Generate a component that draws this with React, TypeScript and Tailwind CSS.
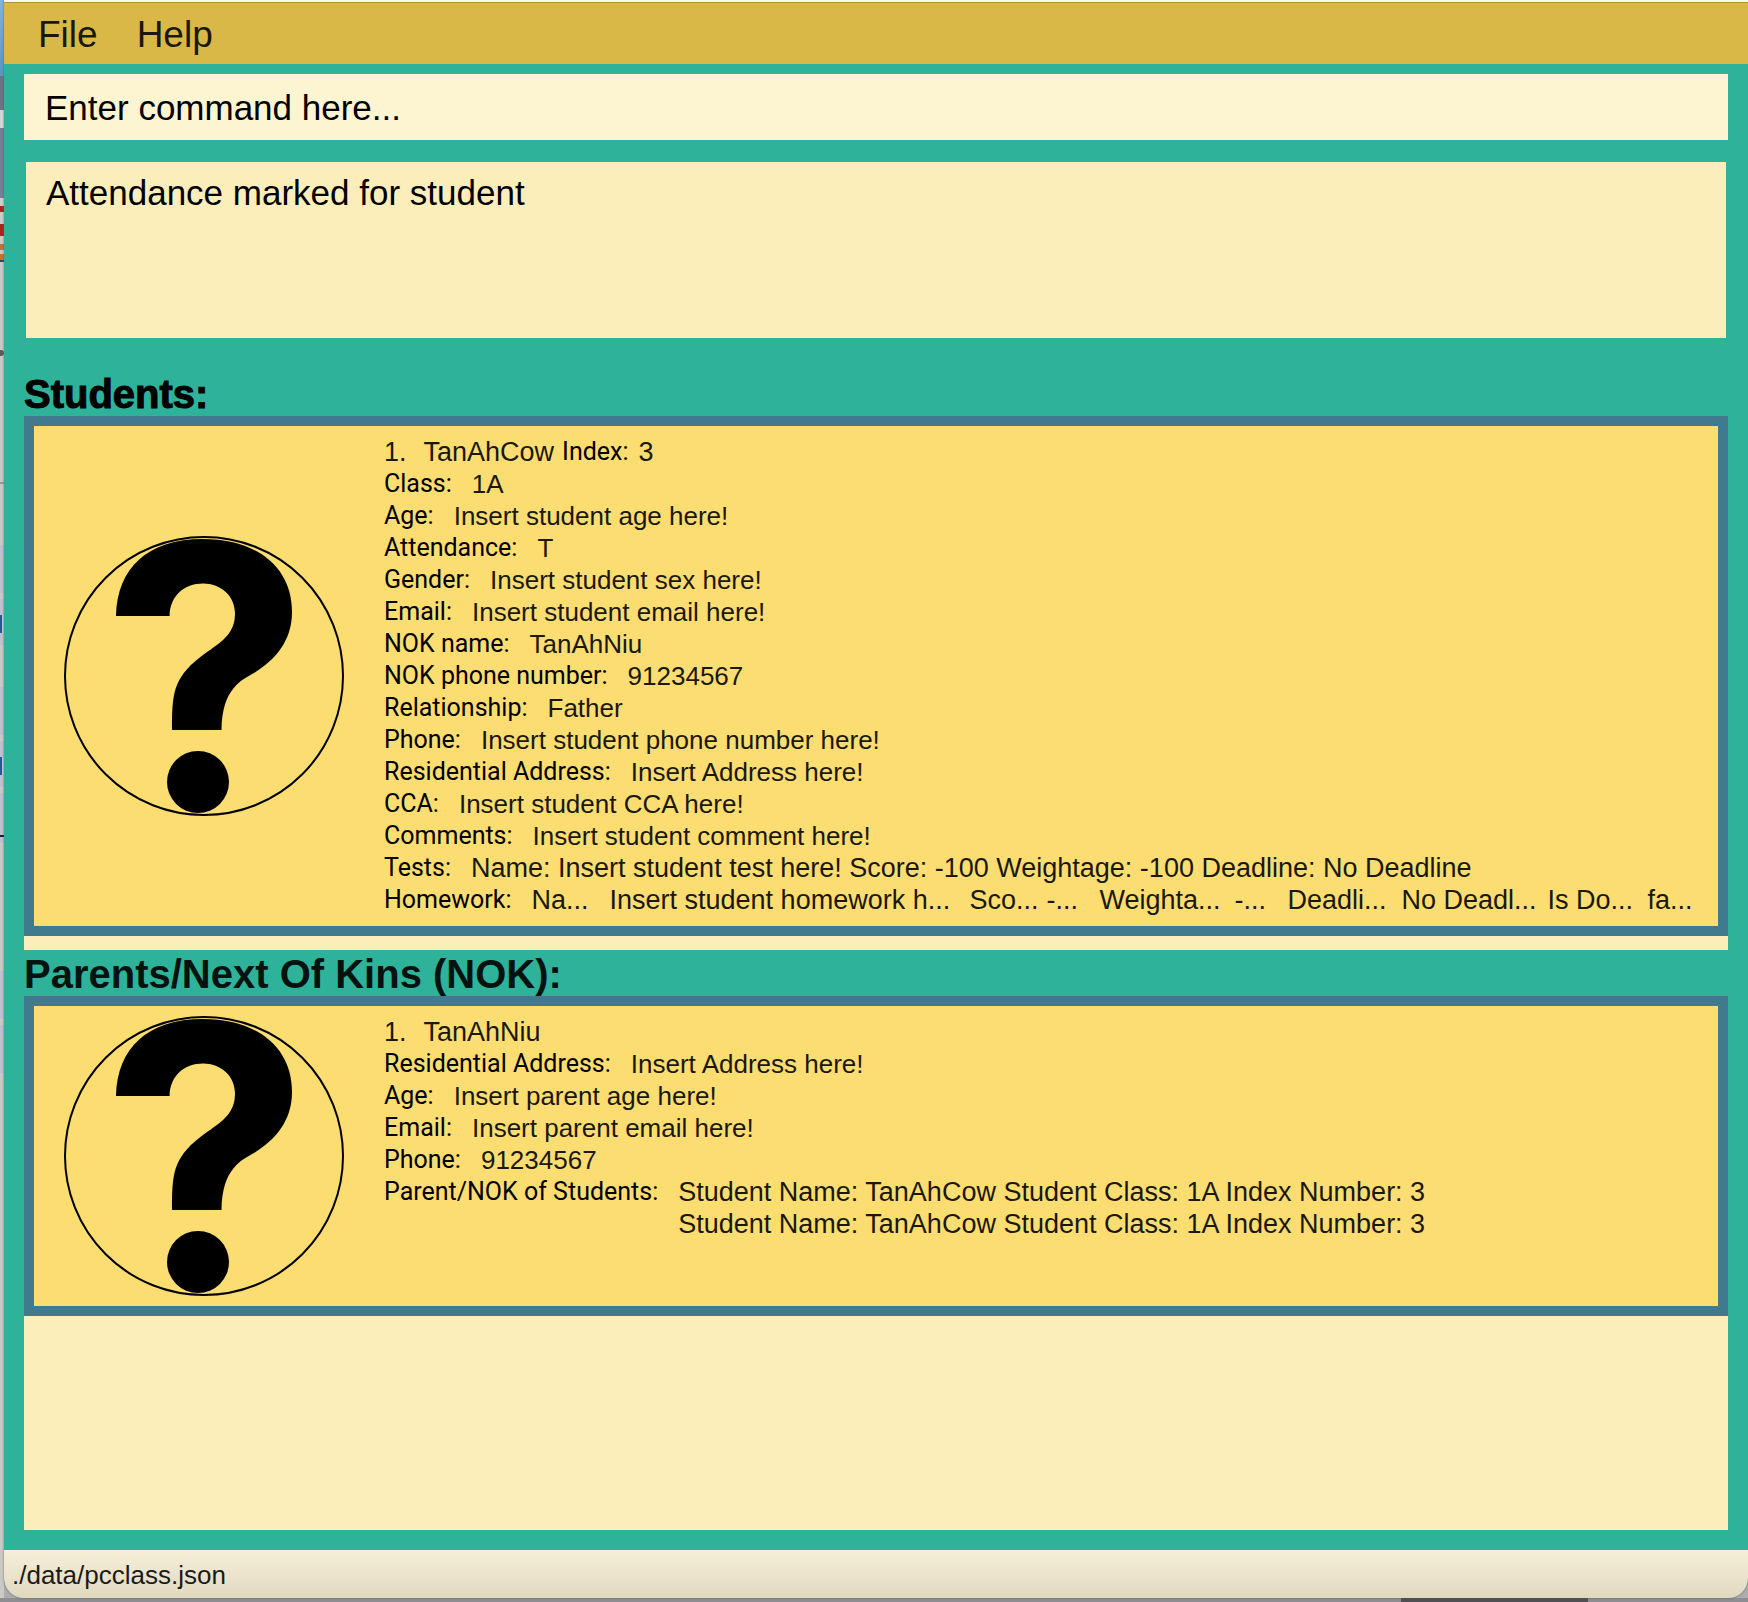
import type { ReactNode } from "react";

const studentFields: [string, string][] = [
  ["Class:", "1A"],
  ["Age:", "Insert student age here!"],
  ["Attendance:", "T"],
  ["Gender:", "Insert student sex here!"],
  ["Email:", "Insert student email here!"],
  ["NOK name:", "TanAhNiu"],
  ["NOK phone number:", "91234567"],
  ["Relationship:", "Father"],
  ["Phone:", "Insert student phone number here!"],
  ["Residential Address:", "Insert Address here!"],
  ["CCA:", "Insert student CCA here!"],
  ["Comments:", "Insert student comment here!"],
];

const parentFields: [string, string][] = [
  ["Residential Address:", "Insert Address here!"],
  ["Age:", "Insert parent age here!"],
  ["Email:", "Insert parent email here!"],
  ["Phone:", "91234567"],
];

const homeworkCells = [
  "Na...",
  "Insert student homework h...",
  "Sco...",
  "-...",
  "Weighta...",
  "-...",
  "Deadli...",
  "No Deadl...",
  "Is Do...",
  "fa...",
];

function Avatar() {
  return (
    <svg viewBox="0 0 280 280" className="size-[280px] shrink-0" role="img" aria-label="No photo">
      <circle cx="140" cy="140" r="139" fill="none" stroke="black" strokeWidth="2" />
      <path d="M52 80C53 32 84 3 138.5 3C194 3 228 32 228 76C228 105 211 124 190 137C178 144 158 152 157.5 194H108C108 165 109 150 121.5 135C128 127 136 121 143 116C160 104.5 171 96 171 77.5C171 60 157 47.5 139 47.5C120 47.5 106 60 105.6 80Z" />
      <circle cx="134" cy="246" r="31" />
    </svg>
  );
}

function Label({ children }: { children: ReactNode }) {
  return <dt className="font-['Roboto',sans-serif] text-[25px] text-black">{children}</dt>;
}

function Field({ label, children }: { label: string; children: ReactNode }) {
  return (
    <div className="flex gap-5">
      <Label>{label}</Label>
      <dd className="text-[26px]">{children}</dd>
    </div>
  );
}

function DetailField({ label, children }: { label: string; children: ReactNode }) {
  return (
    <div className="flex gap-5">
      <Label>{label}</Label>
      <dd>{children}</dd>
    </div>
  );
}

function Card({ children }: { children: ReactNode }) {
  return (
    <article className="flex items-center gap-10 border-10 border-[#417a8f] bg-[#fcdd72] py-2.5 pl-[30px]">
      <Avatar />
      <dl className="min-w-0 grow self-start text-[27px] leading-8 whitespace-nowrap text-[#1a180c]">{children}</dl>
    </article>
  );
}

function Desktop() {
  return (
    <div className="flex w-1 shrink-0 flex-col bg-[#cbc9c7]" aria-hidden="true">
      <div className="h-[76px] bg-linear-to-b from-[#7fb6d8] to-[#5796c4]" />
      <div className="h-[34px] bg-[#6f7085]" />
      <div className="h-[18px] bg-[#d5d5d5]" />
      <div className="h-[70px] bg-[#787c94]" />
      <div className="h-2 bg-[#d0cecb]" />
      <div className="h-1.5 bg-[#a82420]" />
      <div className="h-3 bg-[#cfcac8]" />
      <div className="h-3 bg-[#a82420]" />
      <div className="h-2 bg-[#cfcac8]" />
      <div className="h-1.5 bg-[#c2733a]" />
      <div className="h-1 bg-[#cfcac8]" />
      <div className="h-1.5 bg-[#c2733a]" />
      <div className="h-0.5 bg-[#27496b]" />
      <div className="h-[88px]" />
      <div className="h-1.5 rounded-r bg-[#5c5b5b]" />
      <div className="h-[126px]" />
      <div className="h-0.5 bg-[#999897]" />
      <div className="h-[61px]" />
      <div className="h-12 bg-[#c0bfcf]" />
      <div className="h-1.5" />
      <div className="h-4 bg-[#c0bfcf]" />
      <div className="h-[18px] w-0.5 bg-[#205a9c]" />
      <div className="h-3 bg-[#c0bfcf]" />
      <div className="h-[42px]" />
      <div className="h-12 bg-[#c0bfcf]" />
      <div className="h-1.5" />
      <div className="h-4 bg-[#c0bfcf]" />
      <div className="h-[18px] w-0.5 bg-[#205a9c]" />
      <div className="h-3 bg-[#c0bfcf]" />
      <div className="h-1.5" />
      <div className="h-[42px] bg-[#c0bfcf]" />
      <div className="h-0.5 bg-[#1c1c1c]" />
      <div className="h-1.5 bg-[#c0bfcf]" />
      <div className="h-32" />
      <div className="h-12 bg-[#c0bfcf]" />
      <div className="h-1.5" />
      <div className="h-12 bg-[#c0bfcf]" />
      <div className="grow" />
    </div>
  );
}

export default function App() {
  return (
    <div className="flex min-h-screen flex-col bg-[#8e8d92] font-['Liberation_Sans',Arial,sans-serif]">
      <div className="flex grow bg-[#aeacad]">
        <Desktop />
        <div className="flex min-w-0 grow flex-col overflow-hidden rounded-b-[20px] border-t-2 border-[#faf8f0] bg-[#2eb39a] shadow-[0_0_2px_#555]">
          <nav className="flex h-[62px] items-center gap-[39px] border-t border-[#b8922e] bg-[#d9b848] pt-0.5 pl-[34px] text-[37px] leading-none text-[#1a180c]">
            <button type="button">File</button>
            <button type="button">Help</button>
          </nav>

          <main className="flex grow flex-col px-5 pt-2.5 pb-5">
            <input
              type="text"
              aria-label="Command"
              placeholder="Enter command here..."
              className="h-[66px] w-full bg-[#fdf4d2] px-[21px] pt-0.5 text-[35px] text-black outline-none placeholder:text-black placeholder:opacity-100"
            />
            <textarea
              readOnly
              aria-label="Result"
              defaultValue="Attendance marked for student"
              className="mx-0.5 mt-[22px] block h-44 resize-none bg-[#fceebb] px-5 py-[11px] text-[35px] leading-10 text-black outline-none"
            />

            <section className="mt-8 bg-[#fceebb] pb-3.5">
              <h2 className="bg-[#2eb39a] pt-0.5 text-[40px] leading-[44px] font-bold text-black [-webkit-text-stroke:1px_black]">
                Students:
              </h2>
              <Card>
                <div className="flex">
                  <dd>1.</dd>
                  <dd className="ml-[17px]">TanAhCow</dd>
                  <div className="ml-2 flex gap-2.5">
                    <Label>Index:</Label>
                    <dd>3</dd>
                  </div>
                </div>
                {studentFields.map(([label, value]) => (
                  <Field key={label} label={label}>
                    {value}
                  </Field>
                ))}
                <DetailField label="Tests:">
                  Name: Insert student test here! Score: -100 Weightage: -100 Deadline: No Deadline
                </DetailField>
                <DetailField label="Homework:">
                  <span className="grid grid-cols-[78px_360px_77px_53px_135px_53px_114px_146px_100px_auto]">
                    {homeworkCells.map((cell, i) => (
                      <span key={i}>{cell}</span>
                    ))}
                  </span>
                </DetailField>
              </Card>
            </section>

            <section className="flex grow flex-col bg-[#fceebb]">
              <h2 className="bg-[#2eb39a] pt-0.5 text-[40px] leading-[44px] font-bold text-[#05120f]">
                Parents/Next Of Kins (NOK):
              </h2>
              <Card>
                <div className="flex gap-[17px]">
                  <dd>1.</dd>
                  <dd>TanAhNiu</dd>
                </div>
                {parentFields.map(([label, value]) => (
                  <Field key={label} label={label}>
                    {value}
                  </Field>
                ))}
                <DetailField label="Parent/NOK of Students:">
                  <p>Student Name: TanAhCow Student Class: 1A Index Number: 3</p>
                  <p>Student Name: TanAhCow Student Class: 1A Index Number: 3</p>
                </DetailField>
              </Card>
            </section>
          </main>

          <footer className="flex h-12 items-center bg-linear-to-b from-[#f7efd8] to-[#e0d9c0] pt-0.5 pl-2 text-[26px] text-[#1a1a1a]">
            ./data/pcclass.json
          </footer>
        </div>
      </div>
      <div className="flex h-1 justify-end" aria-hidden="true">
        <div className="mr-40 w-[187px] bg-[#505054]" />
      </div>
    </div>
  );
}
